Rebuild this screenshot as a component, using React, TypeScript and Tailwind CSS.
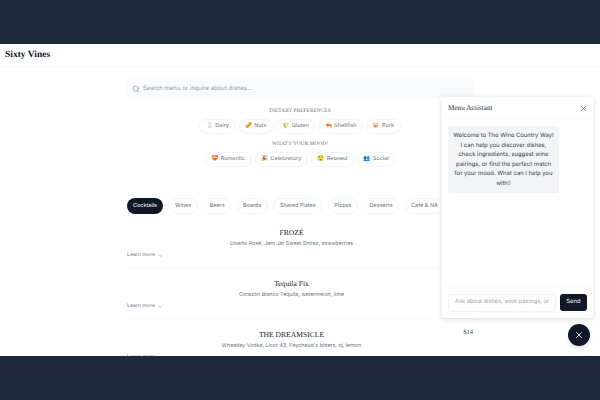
import React from "react";
import { ChevronDown, Search, X } from "lucide-react";

const dietary = [
  { emoji: "🥛", label: "Dairy" },
  { emoji: "🥜", label: "Nuts" },
  { emoji: "🌾", label: "Gluten" },
  { emoji: "🦐", label: "Shellfish" },
  { emoji: "🐷", label: "Pork" },
];

const moods = [
  { emoji: "💝", label: "Romantic" },
  { emoji: "🎉", label: "Celebratory" },
  { emoji: "😌", label: "Relaxed" },
  { emoji: "👥", label: "Social" },
];

const tabs = ["Cocktails", "Wines", "Beers", "Boards", "Shared Plates", "Pizzas", "Desserts", "Café & NA"];

const items = [
  { name: "FROZÉ", desc: "Diseño Rosé, Jam Jar Sweet Shiraz, strawberries", price: "" },
  { name: "Tequila Fix", desc: "Corazón Blanco Tequila, watermelon, lime", price: "" },
  { name: "THE DREAMSICLE", desc: "Wheatley Vodka, Licor 43, Peychaud's bitters, oj, lemon", price: "$14" },
];

function Chip({ emoji, label }: { emoji: string; label: string }) {
  return (
    <span className="flex h-[15px] items-center gap-[2px] rounded-full border border-gray-100 bg-white px-[5.5px] text-[5.6px] text-gray-500">
      <span className="text-[5.8px]">{emoji}</span>
      {label}
    </span>
  );
}

function SectionLabel({ children }: { children: React.ReactNode }) {
  return (
    <div className="text-center font-['Liberation_Serif',serif] text-[5.2px] leading-[8px] tracking-[0.15px] text-gray-500">
      {children}
    </div>
  );
}

export default function App() {
  return (
    <div className="flex h-[400px] w-[600px] flex-col overflow-hidden bg-[#1e293b] py-[44px] font-['Inter',sans-serif] antialiased [text-rendering:geometricPrecision]">
      <div className="relative flex-1 overflow-hidden bg-white">
        <header className="flex h-[23px] items-center border-b border-gray-50 px-[5px] font-['Liberation_Serif',serif] text-[9.5px] font-bold text-gray-900">
          Sixty Vines
        </header>

        <main className="mx-auto w-[346px] pt-[12px]">
          <div className="flex h-[19px] items-center gap-[3px] rounded-[3px] bg-gray-50 px-[5px] text-[6px] text-gray-400">
            <Search size={8} strokeWidth={1.5} className="text-gray-500" />
            Search menu or inquire about dishes...
          </div>

          <div className="mt-[9px]">
            <SectionLabel>DIETARY PREFERENCES</SectionLabel>
          </div>
          <div className="mt-[4px] flex justify-center gap-[3px]">
            {dietary.map((chip) => (
              <Chip key={chip.label} emoji={chip.emoji} label={chip.label} />
            ))}
          </div>
          <div className="mt-[6px]">
            <SectionLabel>WHAT'S YOUR MOOD!</SectionLabel>
          </div>
          <div className="mt-[4px] flex justify-center gap-[3px]">
            {moods.map((chip) => (
              <Chip key={chip.label} emoji={chip.emoji} label={chip.label} />
            ))}
          </div>

          <div className="mt-[31px] flex gap-[5.5px] whitespace-nowrap">
            {tabs.map((tab, i) => (
              <span
                key={tab}
                className={
                  i === 0
                    ? "flex h-[16px] items-center rounded-full bg-gray-900 px-[6px] text-[5.5px] text-white"
                    : "flex h-[16px] items-center rounded-full border border-gray-100 bg-white px-[5.5px] text-[5.5px] text-gray-500"
                }
              >
                {tab}
              </span>
            ))}
          </div>

          <div className="mt-[3px]">
            {items.map((item) => (
              <div key={item.name} className="flex h-[51px] border-b border-gray-50 pt-[10px]">
                <div className="flex-1">
                  <div className="text-center font-['Liberation_Serif',serif] text-[7.6px] font-medium leading-[12px] text-gray-900">
                    {item.name}
                  </div>
                  <div className="mt-[1px] text-center text-[5.3px] leading-[9px] text-gray-500">{item.desc}</div>
                  <div className="mt-[2px] flex items-center gap-[2px] text-[5.2px] leading-[9px] text-gray-500">
                    Learn more
                    <ChevronDown size={7} strokeWidth={1.5} />
                  </div>
                </div>
                <div className="-mt-[1px] w-[17px] text-right font-['Liberation_Serif',serif] text-[6.5px] leading-[10px] text-gray-700">
                  {item.price}
                </div>
              </div>
            ))}
          </div>
        </main>

        <aside className="absolute left-[442px] top-[53px] flex h-[221px] w-[151px] flex-col rounded-[3px] bg-white shadow-[0_1px_6px_rgba(0,0,0,0.14)]">
          <div className="flex h-[22px] shrink-0 items-center justify-between border-b border-gray-50 pl-[6px] pr-[5px] pt-[1px]">
            <span className="font-['Liberation_Serif',serif] text-[7.2px] font-medium text-gray-800">Menu Assistant</span>
            <X size={9} strokeWidth={1.5} className="text-gray-600" />
          </div>
          <div className="flex-1 px-[6px] pt-[7px]">
            <div className="w-[111px] rounded-[3px] bg-gray-100 px-[4px] py-[5px] text-center text-[5.9px] leading-[9.5px] text-gray-700">
              Welcome to The Wine Country Way! I can help you discover dishes, check ingredients, suggest wine pairings, or find the perfect match for your mood. What can I help you with?
            </div>
          </div>
          <div className="flex h-[31px] shrink-0 items-center gap-[4px] border-t border-gray-50 px-[6px] pb-[1px]">
            <div className="flex h-[18px] w-[108px] items-center overflow-hidden whitespace-nowrap rounded-[3px] border border-gray-100 px-[6px] text-[5.7px] text-gray-400">
              Ask about dishes, wine pairings, or
            </div>
            <div className="flex h-[17px] w-[27px] items-center justify-center rounded-[3px] bg-gray-900 text-[5.9px] text-white">
              Send
            </div>
          </div>
        </aside>

        <button className="absolute left-[568px] top-[280px] flex h-[22px] w-[22px] items-center justify-center rounded-full bg-gray-900 text-white shadow-md">
          <X size={10} strokeWidth={2} />
        </button>
      </div>
    </div>
  );
}
